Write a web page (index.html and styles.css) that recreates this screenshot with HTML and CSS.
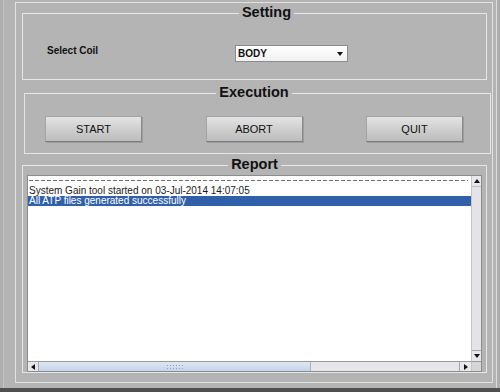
FILE: index.html
```html
<!DOCTYPE html>
<html lang="en">
<head>
    <meta charset="UTF-8">
    <meta name="viewport" content="width=device-width, initial-scale=1.0">
    <title>System Gain Tool</title>
    <link rel="stylesheet" href="styles.css">
</head>
<body>
    <div class="window">
        <div class="frame">
            <fieldset class="group setting">
                <legend>Setting</legend>
                <div class="coil-row">
                    <label class="coil-label">Select Coil</label>
                    <div class="combo">
                        <span>BODY</span>
                        <svg width="6" height="4" viewBox="0 0 6 4"><path d="M0 0H6L3 4Z" fill="#111"/></svg>
                    </div>
                </div>
            </fieldset>

            <fieldset class="group execution">
                <legend>Execution</legend>
                <div class="actions">
                    <button class="btn">START</button>
                    <button class="btn">ABORT</button>
                    <button class="btn">QUIT</button>
                </div>
            </fieldset>

            <fieldset class="group report">
                <legend>Report</legend>
                <div class="log">
                    <div class="log-lines">
                        <div class="log-rule"></div>
                        <div class="log-line">System Gain tool started on 03-Jul-2014 14:07:05</div>
                        <div class="log-line selected">All ATP files generated successfully</div>
                    </div>
                    <div class="vscroll">
                        <div class="arrow up">
                            <svg width="6" height="4" viewBox="0 0 6 4"><path d="M3 0L6 4H0Z" fill="#111"/></svg>
                        </div>
                        <div class="arrow down">
                            <svg width="6" height="4" viewBox="0 0 6 4"><path d="M0 0H6L3 4Z" fill="#111"/></svg>
                        </div>
                    </div>
                    <div class="hscroll">
                        <div class="arrow left">
                            <svg width="4" height="6" viewBox="0 0 4 6"><path d="M0 3L4 0V6Z" fill="#111"/></svg>
                        </div>
                        <div class="thumb"><span class="grip"></span></div>
                        <div class="track"></div>
                        <div class="arrow right">
                            <svg width="4" height="6" viewBox="0 0 4 6"><path d="M4 3L0 0V6Z" fill="#111"/></svg>
                        </div>
                    </div>
                    <div class="corner"></div>
                </div>
            </fieldset>
        </div>
    </div>
    <div class="statusbar"></div>
</body>
</html>
```

FILE: styles.css
```css
body {
    margin: 0;
    width: 500px;
    height: 392px;
    overflow: hidden;
    background-color: #aeaeae;
    font-family: "Liberation Sans", Arial, sans-serif;
    color: #111;
}
.window {
    box-sizing: border-box;
    margin-left: 3px;
    width: 494px;
    height: 388px;
    padding-top: 0;
    background-color: #b4b4b4;
    border-left: 1px solid #c4c4c4;
    border-right: 1px solid #dedede;
    overflow: hidden;
}
.frame {
    box-sizing: border-box;
    margin: 2px 0 0 11px;
    width: 478px;
    height: 381px;
    border: 1px solid #e2e2e2;
}
.statusbar {
    height: 4px;
    background-color: #4f4f4f;
}

/* group boxes */
.group {
    margin: 0;
    padding: 0;
    border: 1px solid #e6e6e6;
    min-inline-size: 0;
}
.group legend {
    margin: 0 auto;
    padding: 0 3px 2px;
    font-size: 14.5px;
    font-weight: bold;
    line-height: 17px;
    color: #111;
}
.setting {
    margin: 1px 5px 0 6px;
    padding: 22px 0 17px 24px;
}
.execution {
    margin: 4px 1px 0 8px;
    padding: 13px 27px 11px 20px;
}
.report {
    margin: 2px 5px 0 6px;
    padding: 0 4px;
}

/* setting row */
.coil-row {
    display: flex;
    align-items: flex-start;
    height: 17px;
}
.coil-label {
    width: 188px;
    font-size: 10px;
    font-weight: bold;
    line-height: 12px;
}
.combo {
    box-sizing: border-box;
    width: 113px;
    height: 17px;
    display: flex;
    align-items: center;
    justify-content: space-between;
    padding: 0 4px 0 2px;
    border: 1px solid #8c8c8c;
    background: linear-gradient(#ffffff, #f1f1f1);
    font-size: 10px;
    font-weight: bold;
}

/* buttons */
.actions {
    display: flex;
    justify-content: space-between;
}
.btn {
    box-sizing: border-box;
    width: 97px;
    height: 26px;
    padding: 0;
    font-family: "Liberation Sans", Arial, sans-serif;
    font-size: 11px;
    color: #111;
    border: 1px solid #a4a4a4;
    border-right-color: #8a8a8a;
    border-bottom-color: #7c7c7c;
    background: linear-gradient(#e4e4e4, #cdcdcd 55%, #bdbdbd);
    box-shadow: 1px 1px 0 #9c9c9c;
}

/* report list */
.log {
    box-sizing: border-box;
    height: 197px;
    display: grid;
    grid-template-columns: 1fr 10px;
    grid-template-rows: 1fr 10px;
    border: 1px solid #8c8c8c;
    background-color: #fff;
}
.log-lines {
    padding-top: 4px;
    font-size: 10px;
    line-height: 10px;
    white-space: nowrap;
    overflow: hidden;
}
.log-rule {
    height: 1px;
    margin: 0 3px 5px 1px;
    background: repeating-linear-gradient(90deg, #707070 0 4px, transparent 4px 6px);
}
.log-line {
    padding-left: 1px;
    height: 10px;
    color: #1a1a1a;
}
.log-line.selected {
    background-color: #3160aa;
    color: #fff;
}
.vscroll {
    display: flex;
    flex-direction: column;
    justify-content: space-between;
    background-color: #e4e4e8;
    border-left: 1px solid #c4c4c8;
}
.hscroll {
    display: flex;
    border-top: 1px solid #9a9a9a;
    background-color: #e6e6ea;
}
.arrow {
    display: flex;
    align-items: center;
    justify-content: center;
    flex: 0 0 10px;
    height: 10px;
    background-color: #e8e8ec;
}
.arrow.up {
    border-bottom: 1px solid #c0c0c4;
}
.arrow.down {
    border-top: 1px solid #a8a8ac;
}
.arrow.left {
    height: auto;
    border-right: 1px solid #a8a8ac;
}
.arrow.right {
    height: auto;
    flex-basis: 11px;
    border-left: 1px solid #a8a8ac;
}
.thumb {
    flex: 0 0 271px;
    display: flex;
    align-items: center;
    justify-content: center;
    background: linear-gradient(#dde7f3, #c4d5e9);
    border-right: 1px solid #a8b4c4;
}
.grip {
    width: 18px;
    height: 6px;
    background-image: radial-gradient(circle, #8ea4c2 0.7px, transparent 1px);
    background-size: 3px 3px;
}
.track {
    flex: 1;
}
.corner {
    background-color: #d6d6d8;
    border-top: 1px solid #9a9a9a;
    border-left: 1px solid #c4c4c8;
}
```
